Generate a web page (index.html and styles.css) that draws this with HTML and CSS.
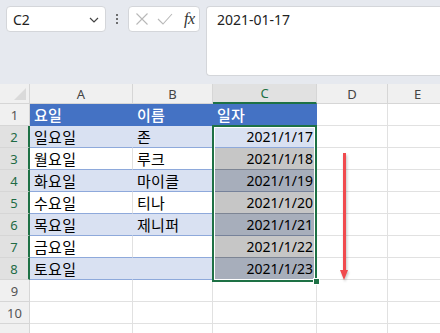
FILE: index.html
```html
<!DOCTYPE html>
<html lang="ko">
<head>
<meta charset="utf-8">
<link rel="stylesheet" href="styles.css">
</head>
<body>
<div class="app">
  <div class="topbar">
    <div class="namebox">
      <span class="ref">C2</span>
      <svg class="chev" width="10" height="6" viewBox="0 0 10 6"><path d="M1 1 L5 5 L9 1" fill="none" stroke="#444" stroke-width="1.2"/></svg>
    </div>
    <div class="dots"><i></i><i></i><i></i></div>
    <div class="fbtns">
      <svg width="14" height="14" viewBox="0 0 14 14"><path d="M1.5 1.5 L12.5 12.5 M12.5 1.5 L1.5 12.5" stroke="#b8b8b8" stroke-width="1.1" fill="none"/></svg>
      <svg width="16" height="14" viewBox="0 0 16 14"><path d="M1 7 L6 12 L15 2" stroke="#b8b8b8" stroke-width="1.1" fill="none"/></svg>
      <span class="fx">fx</span>
    </div>
    <div class="formula">2021-01-17</div>
  </div>
  <div class="sheet">
    <div class="corner"><span class="tri"></span></div>
    <div class="ch">A</div>
    <div class="ch">B</div>
    <div class="ch sel">C</div>
    <div class="ch">D</div>
    <div class="ch">E</div>

    <div class="rh">1</div>
    <div class="c th">요일</div>
    <div class="c th">이름</div>
    <div class="c th">일자</div>
    <div class="c"></div>
    <div class="c"></div>

    <div class="rh sel">2</div>
    <div class="c band">일요일</div>
    <div class="c band">존</div>
    <div class="c band num">2021/1/17</div>
    <div class="c"></div>
    <div class="c"></div>

    <div class="rh sel">3</div>
    <div class="c plain">월요일</div>
    <div class="c plain">루크</div>
    <div class="c plain num gs">2021/1/18</div>
    <div class="c"></div>
    <div class="c"></div>

    <div class="rh sel">4</div>
    <div class="c band">화요일</div>
    <div class="c band">마이클</div>
    <div class="c band num bs">2021/1/19</div>
    <div class="c"></div>
    <div class="c"></div>

    <div class="rh sel">5</div>
    <div class="c plain">수요일</div>
    <div class="c plain">티나</div>
    <div class="c plain num gs">2021/1/20</div>
    <div class="c"></div>
    <div class="c"></div>

    <div class="rh sel">6</div>
    <div class="c band">목요일</div>
    <div class="c band">제니퍼</div>
    <div class="c band num bs">2021/1/21</div>
    <div class="c"></div>
    <div class="c"></div>

    <div class="rh sel">7</div>
    <div class="c plain">금요일</div>
    <div class="c plain"></div>
    <div class="c plain num gs">2021/1/22</div>
    <div class="c"></div>
    <div class="c"></div>

    <div class="rh sel">8</div>
    <div class="c band">토요일</div>
    <div class="c band"></div>
    <div class="c band num bs">2021/1/23</div>
    <div class="c"></div>
    <div class="c"></div>

    <div class="rh">9</div>
    <div class="c"></div><div class="c"></div><div class="c"></div><div class="c"></div><div class="c"></div>
    <div class="rh">10</div>
    <div class="c"></div><div class="c"></div><div class="c"></div><div class="c"></div><div class="c"></div>
    <div class="rh"></div>
    <div class="c"></div><div class="c"></div><div class="c"></div><div class="c"></div><div class="c"></div>

    <div class="selection"><span class="handle"></span></div>
    <div class="arrow"></div>
  </div>
</div>
</body>
</html>
```
FILE: styles.css
```css
* { box-sizing: border-box; }
html, body { margin: 0; padding: 0; }
body {
  width: 440px; height: 333px; overflow: hidden;
  background: #e6e9ef;
  font-family: "Noto Sans", "Noto Sans CJK KR", sans-serif;
  color: #000;
}
.app { width: 440px; height: 333px; overflow: hidden; }
.topbar {
  height: 84px;
  display: flex; align-items: flex-start;
  padding: 6px 0 0 6px;
}
.namebox {
  width: 100px; height: 26px;
  background: #fff; border: 1px solid #d4d6da; border-radius: 4px;
  display: flex; align-items: center; justify-content: space-between;
  padding: 0 6px 0 6px;
}
.ref { font-size: 14px; color: #222; }
.chev { margin-top: 1px; }
.dots {
  width: 22px; height: 26px;
  display: flex; flex-direction: column; align-items: center; justify-content: center; gap: 2px;
}
.dots i { display: block; width: 2px; height: 2px; background: #444; border-radius: 1px; }
.fbtns {
  width: 72px; height: 26px;
  background: #fff; border: 1px solid #d4d6da; border-radius: 4px;
  display: flex; align-items: center; gap: 8px;
  padding: 0 0 0 6px;
}
.fx {
  font-family: "Liberation Serif", serif; font-style: italic;
  font-size: 16px; color: #333; margin-left: 3px; letter-spacing: -0.5px;
}
.formula {
  margin-left: 6px;
  flex: 1; height: 70px;
  background: #fff; border: 1px solid #d4d6da; border-right: none;
  border-radius: 4px 0 0 4px;
  padding: 3px 0 0 10px;
  font-size: 14px; color: #222;
}
.sheet {
  position: relative;
  display: grid;
  grid-template-columns: 30px 103px 80px 104px 71px 60px;
  grid-template-rows: 20px repeat(11, 22px);
  background: #fff;
}
.corner { background: #f0f0f0; border-right: 1px solid #d6d6d6; border-bottom: 1px solid #d6d6d6; position: relative; }
.tri {
  position: absolute; right: 3px; bottom: 3px;
  width: 0; height: 0;
  border-left: 12px solid transparent; border-bottom: 12px solid #dadada;
}
.ch {
  background: #f0f0f0; border-right: 1px solid #d6d6d6; border-bottom: 1px solid #d6d6d6;
  font-size: 13px; color: #444;
  display: flex; align-items: center; justify-content: center;
}
.ch.sel { background: #e1e1e1; color: #1e7145; border-bottom: 2px solid #1e7145; }
.rh {
  background: #f0f0f0; border-right: 1px solid #d6d6d6; border-bottom: 1px solid #d6d6d6;
  font-size: 13px; color: #555;
  display: flex; align-items: center; justify-content: center;
}
.rh.sel { background: #e1e1e1; color: #1e6b45; border-right: 2px solid #1e7145; }
.c {
  border-right: 1px solid #e1e1e1; border-bottom: 1px solid #e1e1e1;
  font-size: 15px; line-height: 20px;
  display: flex; align-items: center;
  padding: 0 3px 0 4px;
  white-space: nowrap;
  letter-spacing: 0.3px;
}
.c.th { background: #4472c4; color: #fff; border-right-color: #4472c4; border-bottom-color: #4472c4; font-weight: 500; }
.c.band { background: #d9e1f2; border-right-color: #d9e1f2; border-bottom-color: #8ea9db; }
.c.plain { background: #fff; border-bottom-color: #8ea9db; }
.c.num { justify-content: flex-end; font-family: "Noto Sans", sans-serif; font-size: 14px; letter-spacing: 0; }
.c.gs { background: #c6c6c6; border-right-color: #c6c6c6; border-bottom-color: #7d8594; }
.c.bs { background: #a7aebb; border-right-color: #a7aebb; border-bottom-color: #76829a; }
.selection {
  position: absolute; left: 212px; top: 41px;
  width: 105px; height: 157px;
  border: 2px solid #1e7145;
  box-shadow: inset 0 0 0 1px #fff;
  z-index: 2;
}
.handle {
  position: absolute; right: -5px; bottom: -5px;
  width: 7px; height: 7px;
  background: #1e7145; border: 1px solid #fff;
}
.arrow {
  position: absolute; left: 343px; top: 69px;
  width: 3px; height: 118px;
  background: #f04a4e;
  box-shadow: 1px 2px 3px rgba(0,0,0,0.25);
  z-index: 3;
}
.arrow::after {
  content: ""; position: absolute; left: -3px; bottom: -9px;
  width: 0; height: 0;
  border-left: 4.5px solid transparent; border-right: 4.5px solid transparent;
  border-top: 10px solid #f04a4e;
  filter: drop-shadow(1px 2px 1px rgba(0,0,0,0.2));
}
```
